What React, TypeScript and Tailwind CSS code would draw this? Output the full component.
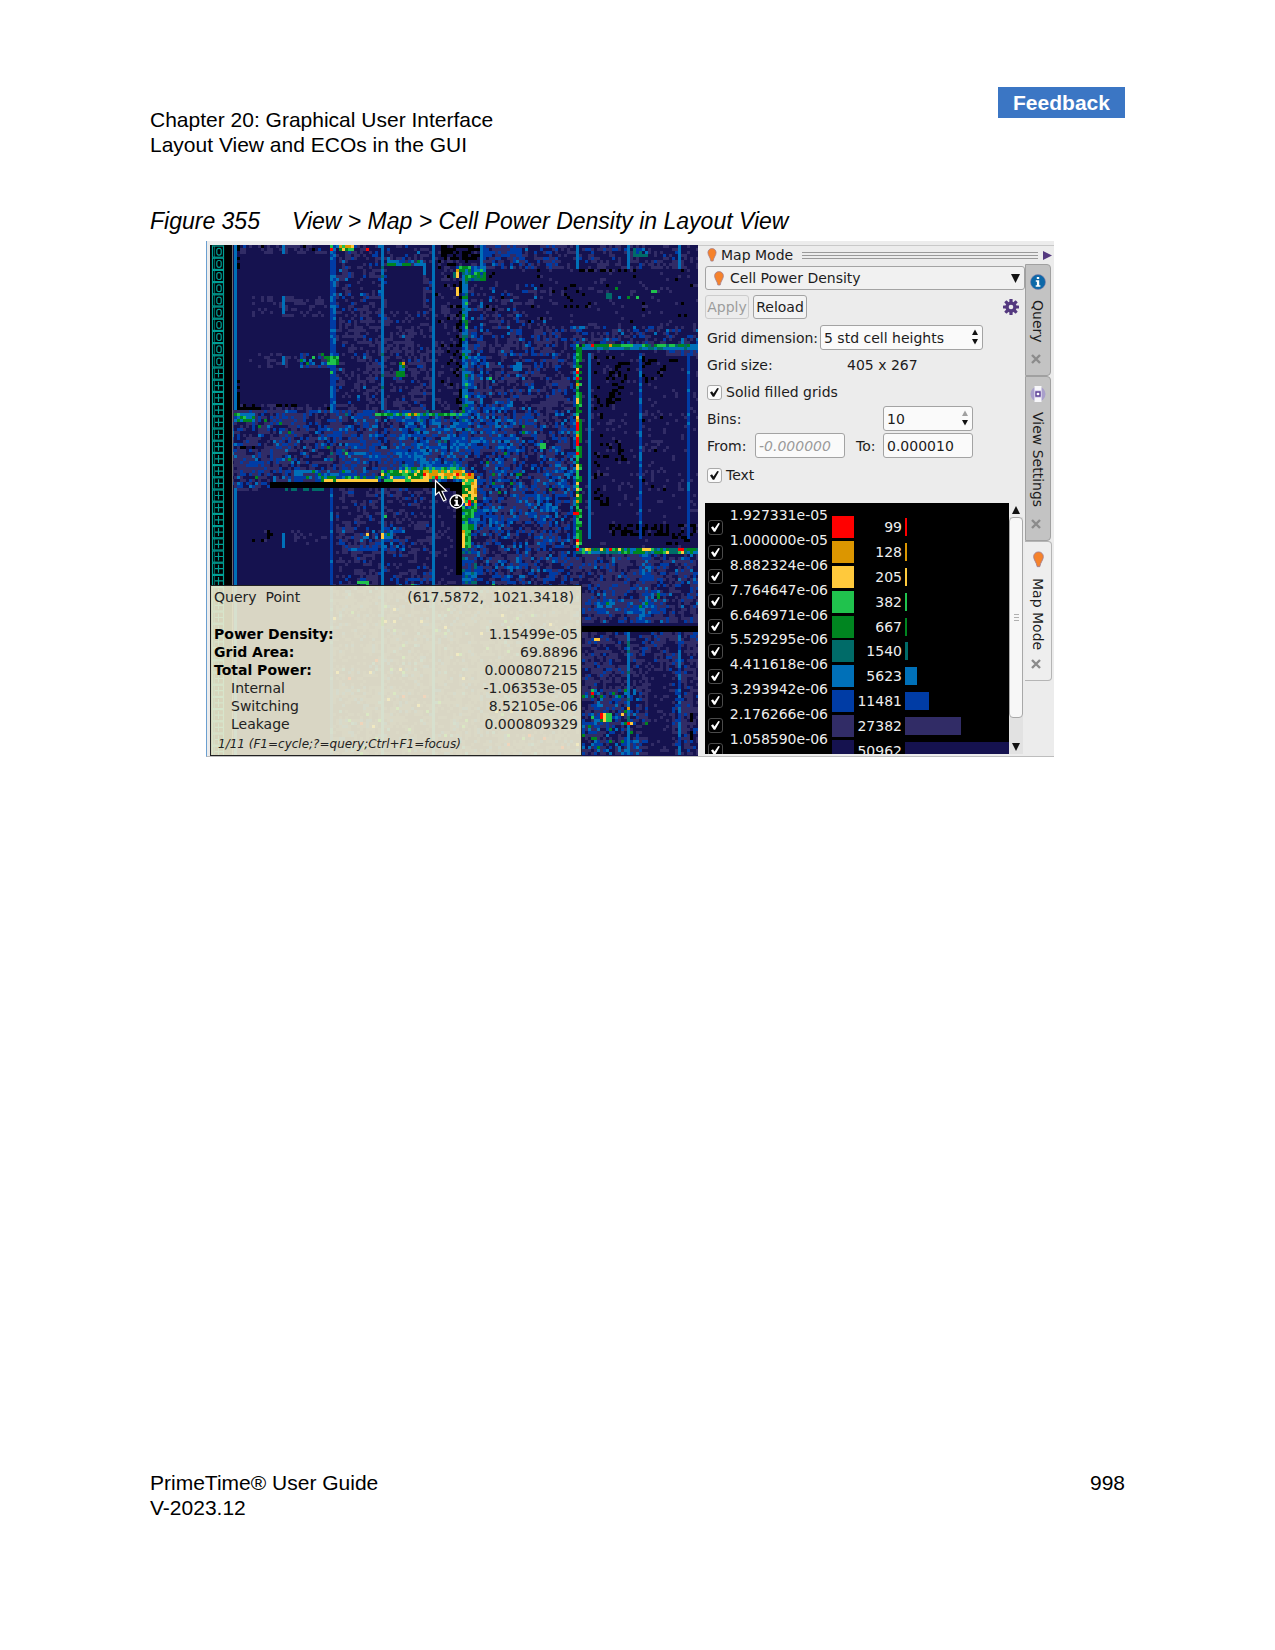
import React, { useMemo } from "react";

const PALETTE = [
  "#000000", "#15124f", "#312c66", "#003ca5", "#0070b8", "#006b68",
  "#008520", "#20c24d", "#ffc93c", "#dc9600", "#ff0000",
];

/* Power map: each region lists x, y, width, height, the fallback colour and
   [colour, probability] pairs. Later regions paint over earlier ones. */
type Region = [number, number, number, number, number, [number, number][]?];

const ORIGIN_X = 210;
const ORIGIN_Y = 245;
const MAP_W = 488;
const MAP_H = 511;
const CELL = 3;

const REGIONS: Region[] = [
  [232, 245, 470, 520, 1],
  // upper left columns
  [234, 245, 96, 10, 1, [[2, 0.4], [0, 0.05], [3, 0.02]]],
  [253, 295, 75, 20, 1, [[2, 0.3]]],
  [250, 352, 60, 14, 1, [[2, 0.28]]],
  [300, 352, 30, 14, 1, [[2, 0.3], [3, 0.25], [6, 0.06], [4, 0.1]]],
  [234, 405, 96, 7, 1, [[2, 0.3], [0, 0.1]]],
  [240, 408, 22, 4, 0],
  [335, 245, 100, 166, 1, [[2, 0.38], [3, 0.05], [4, 0.01]]],
  [335, 245, 50, 60, 1, [[2, 0.36], [3, 0.12], [4, 0.03]]],
  [387, 267, 36, 46, 1],
  [387, 261, 40, 6, 3, [[4, 0.4], [6, 0.25], [2, 0.2]]],
  [387, 262, 9, 4, 6],
  [423, 264, 4, 12, 4],
  [340, 245, 14, 6, 8, [[7, 0.4], [6, 0.2], [9, 0.3]]],
  [330, 245, 5, 30, 3, [[4, 0.4], [7, 0.2]]],
  [330, 249, 4, 3, 10],
  [365, 249, 4, 3, 10],
  [433, 245, 30, 166, 1, [[2, 0.2], [0, 0.06]]],
  // upper middle
  [441, 245, 39, 16, 0, [[1, 0.2], [2, 0.07]]],
  [446, 261, 30, 6, 1, [[0, 0.2], [2, 0.1]]],
  [482, 245, 75, 24, 1, [[3, 0.36], [2, 0.38], [4, 0.05]]],
  [557, 245, 145, 25, 1, [[2, 0.36], [3, 0.05]]],
  [478, 270, 225, 75, 1, [[2, 0.07], [0, 0.02]]],
  [560, 270, 80, 3, 1, [[0, 0.3], [2, 0.1]]],
  [564, 285, 14, 24, 1, [[0, 0.2]]],
  [466, 285, 90, 60, 1, [[2, 0.25], [3, 0.05], [0, 0.02], [4, 0.02]]],
  [570, 325, 130, 18, 1, [[2, 0.25], [3, 0.12], [4, 0.05]]],
  [634, 248, 16, 8, 4, [[3, 0.3], [5, 0.3], [1, 0.3]]],
  [606, 294, 5, 5, 5], [618, 296, 3, 3, 4], [628, 296, 3, 3, 6],
  [636, 296, 3, 3, 7], [650, 290, 5, 3, 7], [615, 288, 3, 3, 6],
  // central channel
  [466, 330, 110, 90, 1, [[2, 0.38], [3, 0.14], [4, 0.03]]],
  [466, 345, 18, 70, 2, [[3, 0.4], [4, 0.25], [1, 0.2]]],
  [455, 414, 122, 105, 1, [[2, 0.38], [3, 0.24], [4, 0.08], [6, 0.01]]],
  [472, 400, 45, 50, 2, [[3, 0.38], [4, 0.16], [1, 0.2]]],
  [466, 519, 110, 66, 1, [[2, 0.38], [3, 0.22], [4, 0.05]]],
  [476, 496, 80, 26, 2, [[3, 0.38], [4, 0.14], [1, 0.15]]],
  [456, 280, 6, 134, 0, [[1, 0.5], [2, 0.08]]],
  [461, 267, 6, 150, 4, [[3, 0.2], [6, 0.15], [5, 0.15], [7, 0.05]]],
  [455, 267, 30, 5, 6, [[4, 0.3], [7, 0.2], [3, 0.2]]],
  [467, 272, 18, 9, 6, [[7, 0.2], [3, 0.3], [5, 0.25]]],
  [456, 269, 3, 10, 8, [[9, 0.3]]], [456, 287, 3, 9, 8],
  [452, 272, 3, 6, 5],
  // wide horizontal channel
  [232, 411, 125, 71, 1, [[2, 0.46], [3, 0.22], [4, 0.05], [6, 0.01]]],
  [320, 411, 140, 71, 1, [[2, 0.4], [3, 0.3], [4, 0.1], [5, 0.02], [6, 0.01]]],
  [400, 415, 68, 60, 2, [[3, 0.4], [4, 0.24], [5, 0.03], [1, 0.15]]],
  [234, 413, 20, 8, 3, [[7, 0.08], [6, 0.22], [4, 0.4]]],
  [375, 414, 90, 3, 6, [[7, 0.25], [9, 0.12], [4, 0.2]]],
  [240, 447, 18, 3, 0, [[1, 0.4]]],
  [290, 470, 60, 11, 2, [[3, 0.4], [4, 0.25], [6, 0.1]]],
  [320, 475, 60, 6, 4, [[6, 0.3], [3, 0.25], [7, 0.1], [9, 0.04]]],
  [325, 478, 55, 3, 7, [[8, 0.45], [6, 0.2]]],
  [358, 478, 22, 3, 8],
  [380, 470, 50, 9, 4, [[6, 0.35], [7, 0.22], [8, 0.08], [3, 0.1]]],
  [385, 478, 45, 3, 8, [[10, 0.12], [7, 0.25]]],
  [424, 471, 41, 10, 8, [[9, 0.5], [7, 0.2], [10, 0.03]]],
  [404, 468, 60, 3, 6, [[4, 0.35], [7, 0.35]]],
  [435, 475, 3, 4, 10],
  [232, 481, 40, 8, 1, [[3, 0.35], [2, 0.3], [4, 0.1]]],
  [270, 483, 192, 5, 0],
  [303, 481, 20, 4, 0],
  // lower left
  [286, 489, 40, 2, 5, [[1, 0.3]]],
  [335, 488, 98, 97, 1, [[2, 0.36], [3, 0.04]]],
  [338, 526, 65, 24, 1, [[3, 0.3], [2, 0.32], [4, 0.1]]],
  [380, 532, 13, 5, 6, [[4, 0.4]]],
  [365, 534, 3, 3, 8], [380, 534, 3, 6, 8], [383, 516, 3, 3, 7],
  [290, 530, 40, 16, 1, [[2, 0.25]]],
  [250, 530, 24, 16, 1, [[0, 0.25], [2, 0.06]]],
  [433, 488, 24, 97, 1, [[2, 0.16]]],
  [335, 579, 95, 6, 1, [[2, 0.2], [3, 0.25]]],
  [356, 580, 12, 3, 7],
  [456, 484, 6, 90, 0],
  [450, 484, 12, 5, 0],
  [462, 478, 14, 24, 7, [[8, 0.34], [9, 0.12], [6, 0.24], [10, 0.04]]],
  [466, 474, 10, 5, 9, [[10, 0.2]]],
  [462, 502, 14, 28, 4, [[6, 0.25], [7, 0.15], [3, 0.25], [8, 0.05]]],
  [462, 510, 5, 22, 6, [[7, 0.4], [4, 0.3]]],
  [462, 531, 5, 18, 8, [[9, 0.2]]], [466, 531, 5, 18, 7, [[6, 0.5]]],
  [462, 549, 14, 36, 4, [[3, 0.35], [5, 0.2], [2, 0.2]]],
  [468, 500, 3, 5, 10], [471, 498, 3, 3, 8],
  // under the tooltip
  [330, 585, 250, 171, 1, [[2, 0.4], [3, 0.08], [4, 0.02], [7, 0.01], [8, 0.006], [10, 0.003]]],
  // macro block
  [574, 343, 128, 212, 1, [[2, 0.08]]],
  [594, 357, 34, 50, 1, [[0, 0.24], [2, 0.05]]],
  [594, 440, 34, 22, 1, [[0, 0.2], [2, 0.08]]],
  [594, 357, 10, 150, 1, [[0, 0.2], [2, 0.06]]],
  [618, 363, 14, 10, 0, [[1, 0.3]]],
  [606, 392, 16, 12, 0, [[1, 0.45]]],
  [643, 357, 34, 28, 1, [[0, 0.15], [2, 0.1]]],
  [643, 410, 34, 80, 1, [[2, 0.16], [0, 0.03]]],
  [643, 358, 43, 3, 0, [[1, 0.4]]],
  [594, 490, 20, 14, 1, [[0, 0.3]]],
  [610, 524, 88, 12, 1, [[0, 0.5], [2, 0.05]]],
  [666, 536, 25, 10, 1, [[0, 0.3]]],
  [589, 354, 3, 186, 4], [638, 354, 4, 186, 3, [[4, 0.35]]], [686, 354, 4, 186, 3, [[4, 0.15]]],
  [666, 351, 32, 5, 2, [[3, 0.3]]],
  [576, 343, 124, 3, 4, [[7, 0.25], [6, 0.3], [5, 0.2], [2, 0.1]]],
  [576, 346, 124, 3, 4, [[5, 0.25]]],
  [625, 343, 8, 4, 7], [591, 343, 3, 3, 10], [609, 343, 3, 4, 9],
  [572, 343, 3, 212, 3, [[1, 0.3], [4, 0.25]]],
  [575, 343, 4, 212, 7, [[6, 0.35], [8, 0.14], [9, 0.06], [10, 0.03]]],
  [578, 343, 3, 212, 6, [[7, 0.2], [1, 0.3]]],
  [575, 371, 3, 3, 10], [575, 377, 3, 3, 10], [575, 423, 3, 8, 10], [575, 436, 3, 9, 10],
  [572, 512, 5, 3, 10], [575, 452, 3, 4, 10],
  [576, 547, 124, 8, 5, [[6, 0.35], [7, 0.12], [4, 0.2], [8, 0.04], [9, 0.02]]],
  [577, 549, 3, 3, 10], [609, 549, 3, 3, 10], [677, 549, 5, 3, 10],
  [584, 549, 3, 3, 8], [643, 549, 6, 3, 8], [601, 549, 3, 3, 8],
  // lower right
  [576, 555, 124, 70, 1, [[2, 0.5], [3, 0.16], [4, 0.03]]],
  [638, 555, 12, 70, 2, [[3, 0.4], [4, 0.2]]],
  [596, 600, 70, 14, 2, [[3, 0.4], [4, 0.16], [6, 0.02]]],
  [656, 594, 3, 7, 6],
  [582, 626, 118, 6, 0],
  [582, 632, 118, 124, 1, [[2, 0.5], [3, 0.1]]],
  [582, 690, 56, 66, 1, [[2, 0.36], [3, 0.25], [4, 0.1], [6, 0.05]]],
  [648, 670, 24, 86, 1, [[2, 0.12]]],
  [594, 638, 6, 3, 8],
  [627, 632, 3, 124, 4, [[5, 0.1]]], [677, 632, 3, 124, 4, [[3, 0.3]]],
  [592, 688, 3, 3, 7], [592, 691, 3, 3, 10], [627, 706, 3, 3, 9],
  [600, 712, 12, 10, 7, [[6, 0.3]]], [603, 712, 3, 10, 8], [600, 713, 3, 6, 10],
  [627, 721, 3, 3, 10], [630, 721, 3, 3, 8], [620, 712, 3, 3, 8],
  [592, 715, 3, 3, 7], [645, 721, 3, 3, 6], [592, 737, 5, 4, 6],
  [691, 714, 3, 9, 0], [691, 731, 3, 9, 0],
  // power straps
  [233, 245, 3, 166, 4], [233, 489, 3, 267, 4],
  [236, 247, 3, 40, 1, [[0, 0.35]]], [236, 380, 3, 31, 1, [[0, 0.6]]],
  [282, 245, 4, 9, 4], [282, 296, 4, 18, 4], [282, 355, 4, 9, 4, [[6, 0.3]]], [282, 532, 4, 15, 4],
  [330, 253, 5, 158, 3, [[4, 0.3], [7, 0.03]]], [330, 488, 4, 268, 3, [[4, 0.2]]],
  [327, 357, 11, 9, 7, [[6, 0.5]]], [330, 372, 3, 3, 7],
  [380, 245, 3, 166, 4, [[5, 0.12]]], [380, 488, 3, 46, 4], [380, 540, 3, 216, 4, [[6, 0.05]]],
  [431, 245, 3, 166, 4], [431, 488, 3, 268, 4],
  [480, 245, 3, 24, 4], [577, 245, 3, 24, 4], [627, 245, 4, 24, 4], [677, 245, 3, 24, 4],
  [399, 362, 6, 9, 6, [[7, 0.3], [4, 0.3]]], [402, 361, 3, 3, 9],
  [396, 371, 9, 5, 6, [[4, 0.3]]],
  [313, 350, 3, 12, 7, [[1, 0.5]]],
  [280, 423, 3, 3, 6], [345, 452, 3, 3, 7], [515, 472, 6, 4, 6], [539, 444, 6, 6, 7, [[6, 0.5]]],
  [488, 377, 3, 3, 7], [515, 362, 6, 9, 4], [506, 327, 3, 3, 4],
];

function makeRandom(seed: number) {
  let s = seed;
  return () => {
    s = (s + 0x6d2b79f5) | 0;
    let t = Math.imul(s ^ (s >>> 15), 1 | s);
    t = (t + Math.imul(t ^ (t >>> 7), 61 | t)) ^ t;
    return ((t ^ (t >>> 14)) >>> 0) / 4294967296;
  };
}

function buildPaths() {
  const cols = Math.ceil(MAP_W / CELL);
  const rows = Math.ceil(MAP_H / CELL);
  const rnd = makeRandom(20231);
  const coarse = Array.from({ length: 80 * 80 }, () => 0.5 + rnd());
  const grid = new Int8Array(cols * rows).fill(0);
  for (const [x, y, w, h, base, mix] of REGIONS) {
    const c0 = Math.max(0, Math.round((x - ORIGIN_X) / CELL));
    const r0 = Math.max(0, Math.round((y - ORIGIN_Y) / CELL));
    const cn = Math.max(1, Math.round(w / CELL));
    const rn = Math.max(1, Math.round(h / CELL));
    for (let r = r0; r < Math.min(rows, r0 + rn); r++) {
      for (let c = c0; c < Math.min(cols, c0 + cn); c++) {
        let v = base;
        if (mix) {
          let p = rnd() / coarse[(r >> 2) * 80 + (c >> 2)];
          for (const [colour, q] of mix) {
            if (p < q) {
              v = colour;
              break;
            }
            p -= q;
          }
        }
        grid[r * cols + c] = v;
      }
    }
  }
  const out = PALETTE.map(() => "");
  for (let r = 0; r < rows; r++) {
    let c = 0;
    while (c < cols) {
      const v = grid[r * cols + c];
      let e = c + 1;
      while (e < cols && grid[r * cols + e] === v) e++;
      if (v !== 0) out[v] += `M${c * CELL} ${r * CELL}h${(e - c) * CELL}v${CELL}h${(c - e) * CELL}z`;
      c = e;
    }
  }
  return out;
}

function PowerMap() {
  const paths = useMemo(buildPaths, []);
  const pads = Array.from({ length: 42 }, (_, i) => i);
  return (
    <svg
      className="block h-full w-full"
      viewBox={`0 0 ${MAP_W} ${MAP_H}`}
      preserveAspectRatio="none"
      role="img"
      aria-label="Cell power density map"
    >
      <rect width={MAP_W} height={MAP_H} fill="#000" />
      <g shapeRendering="crispEdges">
        {paths.map((d, i) => (d ? <path key={i} d={d} fill={PALETTE[i]} /> : null))}
        <rect x="0" y="0" width="22" height={MAP_H} fill="#000" />
        <rect x="22" y="0" width="1" height={MAP_H} fill="#6b6b6b" />
      </g>
      <g stroke="#00a096" fill="none" strokeWidth="1.200">
        {pads.map((i) => {
          const y = 1 + i * 12.2;
          return (
            <g key={i}>
              <rect x="2.500" y={y} width="11" height="11.200" />
              <path d={`M4.500 ${y}v11`} strokeOpacity=".6" />
              {i < 10 ? (
                <rect x="6.800" y={y + 2.3} width="4.400" height="6.800" rx="2" />
              ) : (
                <path d={`M8.500 ${y + 1.5}v8M5 ${y + 5.5}h8`} />
              )}
            </g>
          );
        })}
      </g>
      <path
        d="M225.500 235.500V250L229 247L233.500 256L236 254.800L232 246.200L236.500 246Z"
        fill="#000"
        stroke="#fff"
        strokeWidth="1.200"
      />
      <circle cx="246.500" cy="256.500" r="6.500" fill="#000" stroke="#fff" strokeWidth="1.400" />
      <path d="M245.300 251.300h2.600v2.200h-2.600zM244.300 254.800h3.600v4.600h1.300v1.500h-5v-1.500h1.300v-3.100h-1.200z" fill="#fff" />
    </svg>
  );
}

function Pin({ className }: { className: string }) {
  return (
    <svg className={className} viewBox="0 0 10 15" aria-hidden="true">
      <path
        d="M5 .6C2.400.6.600 2.500.600 4.900c0 3 2.600 5 3.200 9.100h2.400C6.800 9.900 9.400 7.900 9.400 4.900 9.400 2.500 7.600.6 5 .6Z"
        fill="#f6822b"
        stroke="#a3808f"
        strokeWidth=".8"
      />
    </svg>
  );
}

function Gear() {
  return (
    <svg className="size-4" viewBox="0 0 16 16" aria-hidden="true">
      <g fill="#54397f">
        {[0, 45, 90, 135].map((a) => (
          <rect key={a} x="6.400" y="0" width="3.200" height="16" rx=".5" transform={`rotate(${a} 8 8)`} />
        ))}
        <circle cx="8" cy="8" r="5.600" />
      </g>
      <circle cx="8" cy="8" r="2.300" fill="#ececec" />
    </svg>
  );
}

function Check({ id, label, dark }: { id: string; label: string; dark?: boolean }) {
  return (
    <span className="relative block size-[15px] shrink-0">
      <input
        id={id}
        type="checkbox"
        defaultChecked
        aria-label={label}
        className={
          dark
            ? "peer block size-[15px] appearance-none rounded-[3px] border border-[#4a4a4a] bg-black"
            : "peer block size-[15px] appearance-none rounded-[3px] border border-[#a9a9a9] bg-[#fafafa]"
        }
      />
      <svg
        className="pointer-events-none absolute inset-0 hidden size-[15px] peer-checked:block"
        viewBox="0 0 15 15"
        aria-hidden="true"
      >
        <path d="M3 7.500 5 6.300 6.500 8.400 10.300 3 11.900 3.600 7.200 11.800H5.800Z" fill={dark ? "#fff" : "#111"} />
      </svg>
    </span>
  );
}

function Spin({ topOff }: { topOff?: boolean }) {
  return (
    <svg className="pointer-events-none absolute top-1 right-1 h-4 w-2" viewBox="0 0 8 16" aria-hidden="true">
      <path d="M4 0.500 7 6H1Z" fill={topOff ? "#a0a0a0" : "#111"} />
      <path d="M4 15.500 7 10H1Z" fill="#111" />
    </svg>
  );
}

const BINS = [
  { from: "1.927331e-05", color: "#ff0000", count: 99, width: 2 },
  { from: "1.000000e-05", color: "#dc9600", count: 128, width: 2 },
  { from: "8.882324e-06", color: "#ffc93c", count: 205, width: 2 },
  { from: "7.764647e-06", color: "#20c24d", count: 382, width: 2 },
  { from: "6.646971e-06", color: "#008520", count: 667, width: 2 },
  { from: "5.529295e-06", color: "#006b68", count: 1540, width: 3 },
  { from: "4.411618e-06", color: "#0070b8", count: 5623, width: 12 },
  { from: "3.293942e-06", color: "#003ca5", count: 11481, width: 24 },
  { from: "2.176266e-06", color: "#312c66", count: 27382, width: 56 },
  { from: "1.058590e-06", color: "#15124f", count: 50962, width: 104 },
];

function Legend() {
  return (
    <div className="mr-[2px] ml-[7px] flex h-[251px]">
      <div className="flex min-w-0 flex-1 overflow-hidden bg-black pl-[3px] text-[#eeeeee]">
        <div className="mt-3 flex h-[248px] w-[15px] shrink-0 flex-col">
          {BINS.map((b) => (
            <div key={b.from} className="flex flex-1 items-center">
              <Check id={`bin-${b.count}`} label={`Show bin ${b.from}`} dark />
            </div>
          ))}
        </div>
        <div className="flex h-[248px] w-[105px] shrink-0 flex-col text-right">
          {BINS.map((b) => (
            <div key={b.from} className="flex flex-1 items-center justify-end">
              {b.from}
            </div>
          ))}
        </div>
        <div className="mt-3 ml-1 flex h-[248px] w-[22px] shrink-0 flex-col">
          {BINS.map((b) => (
            <div key={b.from} className="flex flex-1 items-center">
              <span className="h-[22px] w-full" style={{ backgroundColor: b.color }} />
            </div>
          ))}
        </div>
        <div className="mt-3 flex h-[248px] min-w-0 flex-1 flex-col">
          {BINS.map((b) => (
            <div key={b.from} className="flex flex-1 items-center">
              <span className="w-12 shrink-0 text-right">{b.count}</span>
              <span className="ml-[3px] h-[18px] shrink-0" style={{ width: b.width, backgroundColor: b.color }} />
            </div>
          ))}
        </div>
      </div>
      <div className="flex w-[14px] flex-col bg-[#e2e2e2]">
        <button aria-label="Scroll up" className="flex h-[14px] items-center justify-center bg-[#ececec]">
          <svg className="h-2 w-[8px]" viewBox="0 0 8 8" aria-hidden="true">
            <path d="M4 0 8 8H0Z" fill="#111" />
          </svg>
        </button>
        <div className="flex h-[201px] flex-col items-center justify-center gap-[2px] rounded-sm border border-[#a8a8a8] bg-[#f7f7f7]">
          <span className="h-px w-[5px] bg-[#b0b0b0]" />
          <span className="h-px w-[5px] bg-[#b0b0b0]" />
          <span className="h-px w-[5px] bg-[#b0b0b0]" />
        </div>
        <button aria-label="Scroll down" className="mt-auto flex h-[14px] items-center justify-center">
          <svg className="h-2 w-[8px]" viewBox="0 0 8 8" aria-hidden="true">
            <path d="M4 8 8 0H0Z" fill="#111" />
          </svg>
        </button>
      </div>
    </div>
  );
}

function CloseX() {
  return (
    <svg className="block size-[10px]" viewBox="0 0 10 10" aria-hidden="true">
      <path d="M1 1 9 9M9 1 1 9" stroke="#8b8b8b" strokeWidth="2.400" />
    </svg>
  );
}

function InfoIcon() {
  return (
    <svg className="size-4" viewBox="0 0 16 16" aria-hidden="true">
      <circle cx="8" cy="8" r="7.500" fill="#0d68a8" stroke="#8a7fa8" strokeWidth=".6" />
      <path d="M6.800 3h2.400v2H6.800zM5.800 6.300h3.400v4.900h1.200v1.500H5.700v-1.500h1.200V7.800H5.800z" fill="#fff" />
    </svg>
  );
}

function ViewIcon() {
  return (
    <svg className="size-4" viewBox="0 0 16 16" aria-hidden="true">
      <circle cx="8" cy="8" r="7.500" fill="#a99fcb" />
      <path d="M4.500 0h7v16h-7z" fill="#f7f7fa" />
      <path d="M5 4h6v8H5z" fill="#ddd8ee" />
      <path d="M6 6h4v4H6z" fill="#fff" stroke="#5b3f96" strokeWidth="1.400" />
    </svg>
  );
}

function SideTab({
  icon, label, size, active,
}: { icon: React.ReactNode; label: string; size: string; active?: boolean }) {
  return (
    <div
      className={`${size} flex flex-col items-center rounded-r-[4px] border pt-[9px] pb-[11px] ${
        active
          ? "w-[27px] border-l-0 border-[#b5b5b5] bg-[#eeeeee]"
          : "w-[26px] border-[#a0a0a0] bg-[#c3c3c3]"
      }`}
    >
      <button role="tab" aria-selected={!!active} className="flex flex-col items-center">
        {icon}
        <span className="mt-[10px] leading-4 whitespace-nowrap [writing-mode:vertical-rl]">{label}</span>
      </button>
      <button aria-label={`Close ${label}`} className="mt-auto mr-[5px]">
        <CloseX />
      </button>
    </div>
  );
}

const FIELD = "block w-full appearance-none rounded-[3px] border border-[#a3a3a3] bg-[#fafafa] pl-[3px] outline-none";

function MapModePanel() {
  return (
    <div className="min-w-0 flex-1">
      <div className="mt-[2px] ml-[7px] flex h-6 items-center rounded-[3px] border border-[#a3a3a3] bg-[#f1f1f1]">
        <div className="relative w-full">
          <Pin className="absolute top-1 left-2 h-[15px] w-[10px]" />
          <select aria-label="Map" className="block h-[22px] w-full appearance-none bg-transparent pl-6 outline-none">
            <option>Cell Power Density</option>
          </select>
          <svg className="pointer-events-none absolute top-[7px] right-1 size-[9px]" viewBox="0 0 9 9" aria-hidden="true">
            <path d="M0 0h9L4.500 9Z" fill="#111" />
          </svg>
        </div>
      </div>
      <div className="mt-[5px] ml-[7px] flex items-center">
        <button disabled className="h-6 w-11 rounded-[3px] border border-[#cccccc] text-[#9c9c9c]">Apply</button>
        <button className="ml-1 h-6 w-[54px] rounded-[3px] border border-[#a3a3a3] bg-[#f3f3f3]">Reload</button>
        <button aria-label="Settings" className="mr-[6px] ml-auto">
          <Gear />
        </button>
      </div>
      <div className="mt-[6px] ml-[9px] flex items-center">
        <label htmlFor="grid-dim" className="w-[113px] whitespace-nowrap">Grid dimension:</label>
        <span className="relative block w-[163px]">
          <select id="grid-dim" className={`${FIELD} h-[25px]`}>
            <option>5 std cell heights</option>
          </select>
          <Spin />
        </span>
      </div>
      <div className="mt-[6px] ml-[9px] flex h-[18px] items-center">
        <span className="w-[140px]">Grid size:</span>
        <span>405 x 267</span>
      </div>
      <div className="mt-[9px] ml-[9px] flex h-[18px] items-center gap-1">
        <Check id="solid" label="Solid filled grids" />
        <label htmlFor="solid">Solid filled grids</label>
      </div>
      <div className="mt-[5px] ml-[9px] flex items-center">
        <label htmlFor="bins" className="w-[176px]">Bins:</label>
        <span className="relative block w-[90px]">
          <input id="bins" type="number" defaultValue={10} className={`${FIELD} h-[25px] [appearance:textfield]`} />
          <Spin topOff />
        </span>
      </div>
      <div className="mt-[2px] ml-[9px] flex items-center">
        <label htmlFor="from" className="w-12">From:</label>
        <input id="from" disabled defaultValue="-0.000000" className={`${FIELD} h-[25px] max-w-[90px] text-[#9a9a9a] italic`} />
        <label htmlFor="to" className="w-[38px] shrink-0 pl-[11px]">To:</label>
        <span className="block w-[90px] shrink-0">
          <input id="to" defaultValue="0.000010" className={`${FIELD} h-[25px]`} />
        </span>
      </div>
      <div className="mt-2 mb-[19px] ml-[9px] flex h-[18px] items-center gap-1">
        <Check id="text" label="Text" />
        <label htmlFor="text">Text</label>
      </div>
      <Legend />
    </div>
  );
}

const QUERY_ROWS = [
  { label: "Power Density:", value: "1.15499e-05", bold: true },
  { label: "Grid Area:", value: "69.8896", bold: true },
  { label: "Total Power:", value: "0.000807215", bold: true },
  { label: "Internal", value: "-1.06353e-05" },
  { label: "Switching", value: "8.52105e-06" },
  { label: "Leakage", value: "0.000809329" },
];

function QueryTooltip() {
  return (
    <div
      role="tooltip"
      className="absolute bottom-0 left-0 w-[372px] border border-[#222222] bg-[#eeecd0]/90 px-[3px] pt-[2px] text-[#222222]"
    >
      <div className="flex justify-between pr-1 whitespace-pre">
        <span>Query  Point</span>
        <span>(617.5872,  1021.3418)</span>
      </div>
      <table className="mt-[19px] w-full">
        <tbody>
          {QUERY_ROWS.map((r) => (
            <tr key={r.label}>
              <th scope="row" className={r.bold ? "text-left font-bold text-black" : "pl-[17px] text-left font-normal"}>
                {r.label}
              </th>
              <td className="text-right">{r.value}</td>
            </tr>
          ))}
        </tbody>
      </table>
      <p className="my-[2px] pl-1 text-[12px] leading-[18px] italic">1/11 (F1=cycle;?=query;Ctrl+F1=focus)</p>
    </div>
  );
}

export default function App() {
  return (
    <div className="flex min-h-screen flex-col bg-white px-[150px] pt-[87px] pb-[130px] font-['Liberation_Sans',sans-serif] text-[21px] leading-[25px] text-black">
      <header className="flex items-start justify-between">
        <div className="mt-5">
          <p>Chapter 20: Graphical User Interface</p>
          <p>Layout View and ECOs in the GUI</p>
        </div>
        <button className="h-[31px] w-[127px] bg-[#3b76c4] font-bold text-white">Feedback</button>
      </header>

      <figure className="mt-[50px]">
        <figcaption className="flex gap-8 text-[23px] leading-7 italic">
          <span>Figure 355</span>
          <span>View &gt; Map &gt; Cell Power Density in Layout View</span>
        </figcaption>
        <div className="mt-[6px] mr-[71px] ml-14 flex border-b border-l border-b-[#bdbdbd] border-l-[#6a9fd0] bg-[#ececec] pt-1 font-['DejaVu_Sans',sans-serif] text-[14px] leading-[18px] text-[#1c1c1c]">
          <div className="relative ml-[3px] min-w-0 flex-1 bg-black">
            <div className="absolute inset-0">
              <PowerMap />
            </div>
            <QueryTooltip />
          </div>
          <div className="w-[356px] shrink-0 border-t border-[#c8c8c8]">
            <div className="ml-[9px] flex h-[18px] items-center">
              <Pin className="h-[14px] w-[10px]" />
              <span className="ml-1">Map Mode</span>
              <div className="mx-[9px] flex flex-1 flex-col gap-[2px]">
                <span className="h-px bg-[#999999]" />
                <span className="h-px bg-[#999999]" />
                <span className="h-px bg-[#999999]" />
              </div>
              <button aria-label="Collapse panel" className="-ml-1 pr-[2px]">
                <svg className="size-[9px]" viewBox="0 0 9 9" aria-hidden="true">
                  <path d="M0 0 9 4.500 0 9Z" fill="#54397f" />
                </svg>
              </button>
            </div>
            <div className="flex pb-[2px]">
              <MapModePanel />
              <div role="tablist" aria-label="Panels" className="w-[29px] shrink-0">
                <SideTab icon={<InfoIcon />} label="Query" size="h-[112px]" />
                <SideTab icon={<ViewIcon />} label="View Settings" size="h-[165px]" />
                <SideTab icon={<Pin className="h-[17px] w-[11px]" />} label="Map Mode" size="h-[140px]" active />
              </div>
            </div>
          </div>
        </div>
      </figure>

      <footer className="mt-auto flex justify-between">
        <div>
          <p>PrimeTime® User Guide</p>
          <p>V-2023.12</p>
        </div>
        <p>998</p>
      </footer>
    </div>
  );
}
